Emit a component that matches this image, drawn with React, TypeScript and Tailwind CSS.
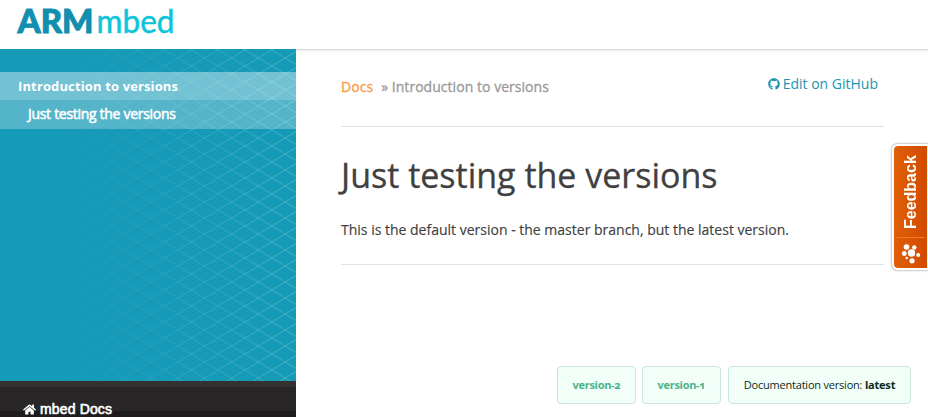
import React from "react";
import { FaGithub, FaHome } from "react-icons/fa";

const versions = ["version-2", "version-1"];

const latticeLines = Array.from({ length: 56 }, (_, i) => 285.2 + (i - 33) * 26.8);

function Logo() {
  return (
    <svg width="180" height="40" viewBox="0 0 180 40" role="img" aria-label="ARM mbed">
      <text x="17.5" y="33.2" textLength="76" lengthAdjust="spacingAndGlyphs" strokeWidth="0.9" className="fill-[#128fae] stroke-[#128fae] font-['Lato',sans-serif] text-[32px] font-black">
        ARM
      </text>
      <text x="96.5" y="33.3" textLength="78" lengthAdjust="spacingAndGlyphs" strokeWidth="0.5" className="fill-[#0cc5dc] stroke-[#0cc5dc] font-['Lato',sans-serif] text-[32px]">
        mbed
      </text>
    </svg>
  );
}

function Lattice() {
  return (
    <svg className="absolute inset-0 h-full w-full" aria-hidden="true">
      <defs>
        <linearGradient id="fade">
          <stop offset="0.16" stopColor="white" stopOpacity="0" />
          <stop offset="1" stopColor="white" stopOpacity="0.42" />
        </linearGradient>
        <mask id="fadeMask" maskUnits="userSpaceOnUse" x="0" y="0" width="296" height="332">
          <rect width="296" height="332" fill="url(#fade)" />
        </mask>
      </defs>
      <g mask="url(#fadeMask)" stroke="#83d2cf" strokeWidth="1">
        {latticeLines.map((x) => (
          <React.Fragment key={x}>
            <line x1={x - 26.8} y1="-7" x2={x + 562.8} y2="345" />
            <line x1={x + 26.8} y1="-7" x2={x - 562.8} y2="345" />
          </React.Fragment>
        ))}
      </g>
    </svg>
  );
}

function Sidebar() {
  return (
    <aside className="flex w-[296px] shrink-0 flex-col">
      <nav className="relative h-[332px] overflow-hidden bg-[#159ab7] pt-[23px] text-white">
        <Lattice />
        <div className="relative h-7 bg-white/40 pl-[18px] text-[13px] leading-[29px] font-bold">
          <span className="inline-block tracking-[0.13px]">Introduction to versions</span>
        </div>
        <div className="relative h-[29px] bg-white/27 pl-7 text-[14px] leading-[28px] font-medium tracking-[-0.3px] [-webkit-text-stroke:0.5px_white]">
          Just testing the versions
        </div>
      </nav>
      <div className="h-9 border-t-6 border-[#33322f] bg-[linear-gradient(#282627_24px,#1f1c1d_24px)] pt-[14px] pl-[23px]">
        <div className="flex items-center gap-1 font-['Liberation_Sans',sans-serif] text-[14px] leading-4 tracking-[0.15px] text-white [-webkit-text-stroke:0.6px_white]">
          <FaHome className="h-[13px] w-[13px]" />
          mbed Docs
        </div>
      </div>
    </aside>
  );
}

function Feedback() {
  return (
    <div className="absolute top-[143px] right-0 h-[128px] w-[37px] rounded-l-[7px] border border-r-0 border-[#d5d5d5] bg-white py-[2px] pl-[2px] shadow-[0_0_2px_#ccc]">
      <div className="flex h-full w-[33px] flex-col items-center rounded-l-[4px] bg-linear-to-r from-[#e15f08] to-[#d24a00]">
        <span className="h-[91px] rotate-180 pt-2 font-['Liberation_Sans',sans-serif] text-[16px] leading-[33px] font-bold text-white [writing-mode:vertical-rl]">
          Feedback
        </span>
        <div className="h-px w-7 bg-[#ed7b2c]" />
        <svg width="20" height="22" viewBox="0 0 20 22" className="mt-1 fill-white" aria-hidden="true">
          <circle cx="5.5" cy="5" r="2.8" />
          <circle cx="13.3" cy="5.5" r="2.2" />
          <circle cx="10.5" cy="11" r="3.7" />
          <circle cx="3.3" cy="11.5" r="2.4" />
          <circle cx="17.2" cy="13" r="2" />
          <circle cx="5.8" cy="16" r="1.3" />
          <circle cx="11" cy="18.8" r="2.6" />
        </svg>
      </div>
    </div>
  );
}

export default function App() {
  return (
    <div className="relative flex h-[417px] w-[928px] flex-col overflow-hidden bg-white font-['Open_Sans','Noto_Sans',sans-serif]">
      <header className="h-[49px]">
        <Logo />
      </header>
      <div className="flex flex-1">
        <Sidebar />
        <main className="flex flex-1 flex-col shadow-[inset_0_3px_3px_-2px_#ccc]">
          <div className="ml-[45px] w-[543px]">
            <div className="flex h-[78px] justify-between border-b border-[#e1e1e1] pt-[23px] pr-[6px]">
              <div className="pt-[4px] text-[14px] leading-[22px] tracking-[0.04px] text-[#999] [-webkit-text-stroke:0.3px_#999]">
                <a className="mr-2 text-[#f99b45] [-webkit-text-stroke:0.3px_#f99b45]">Docs</a>
                » Introduction to versions
              </div>
              <a className="flex h-[22px] items-center gap-[3px] text-[14px] text-[#2095b0]">
                <FaGithub className="h-3 w-3 translate-y-px" />
                Edit on GitHub
              </a>
            </div>
            <h1 className="mt-[24px] text-[34px] leading-[48px] text-[#404040] [-webkit-text-stroke:0.3px_#404040]">Just testing the versions</h1>
            <p className="mt-[19px] h-[47px] border-b border-[#e1e1e1] text-[14px] leading-6 text-[#404040] [-webkit-text-stroke:0.15px_#404040]">
              This is the default version - the master branch, but the latest version.
            </p>
          </div>
          <div className="mt-[101px] mr-[17px] flex justify-end gap-[6px] text-[11px] leading-9">
            {versions.map((version) => (
              <a key={version} className="h-[38px] w-[79px] rounded-[4px] border border-[#cbe5da] bg-[#f2fff8] text-center font-bold tracking-[-0.3px] text-[#4db38b] [font-variant-numeric:oldstyle-nums]">
                {version}
              </a>
            ))}
            <div className="ml-px h-[38px] w-[183px] rounded-[4px] border border-[#cbe5da] bg-[#f2fff8] text-center tracking-[-0.21px] whitespace-nowrap text-[#0b2b20]">
              Documentation version: <b>latest</b>
            </div>
          </div>
        </main>
      </div>
      <Feedback />
    </div>
  );
}
